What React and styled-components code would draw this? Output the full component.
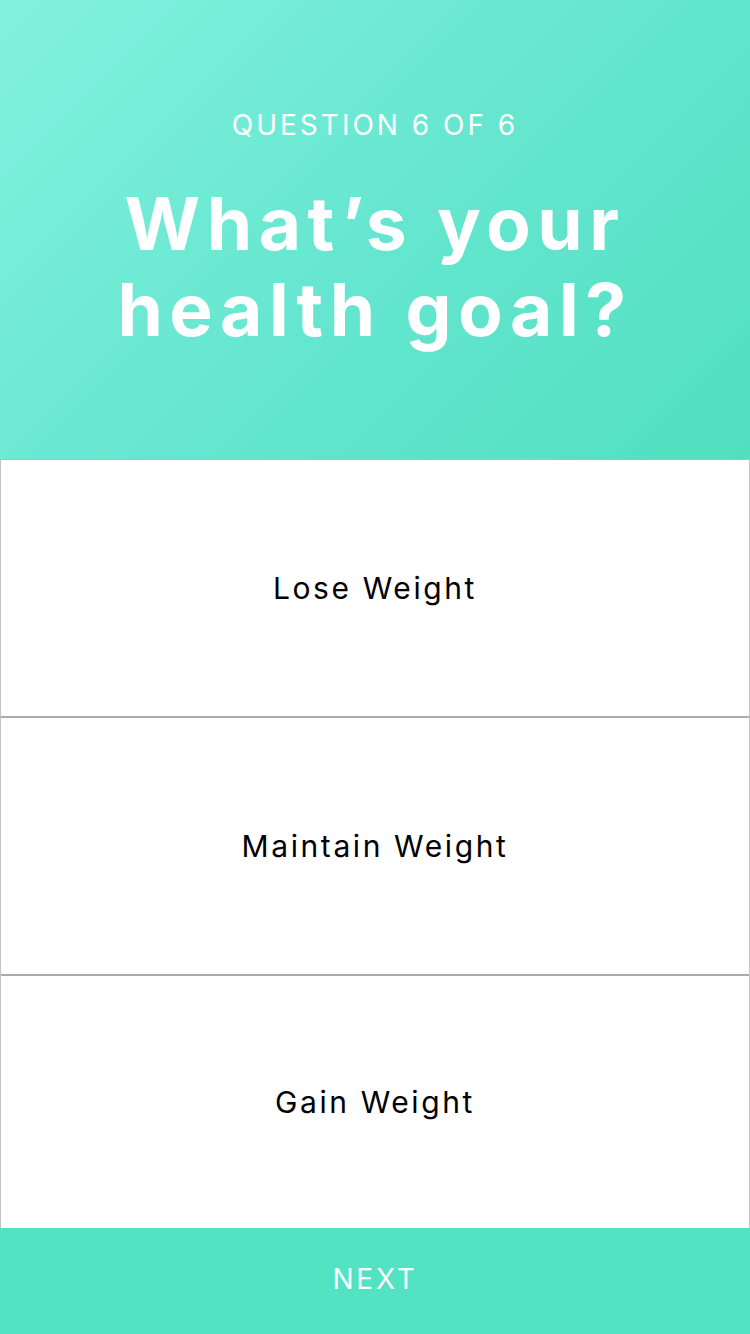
import React from 'react';
import styled, { createGlobalStyle } from 'styled-components';

const GlobalStyle = createGlobalStyle`
  html, body {
    margin: 0;
    padding: 0;
    background: #ffffff;
  }
  body {
    font-family: Inter, "Liberation Sans", sans-serif;
  }
`;

const Screen = styled.div`
  display: flex;
  flex-direction: column;
  width: 750px;
  height: 1334px;
  overflow: hidden;
`;

const Header = styled.header`
  display: flex;
  flex-direction: column;
  align-items: center;
  height: 460px;
  flex-shrink: 0;
  padding-top: 107px;
  box-sizing: border-box;
  background: linear-gradient(135deg, #82f2de 0%, #66e6d0 50%, #50e0c0 100%);
  border-bottom: 1px solid #b8b8b8;
  color: #ffffff;
`;

const Step = styled.div`
  font-size: 28px;
  font-weight: 400;
  letter-spacing: 3px;
  line-height: 36px;
`;

const Title = styled.h1`
  margin: 38px 0 0;
  font-size: 73px;
  font-weight: 700;
  letter-spacing: 6.5px;
  line-height: 86px;
  text-align: center;
`;

const Options = styled.div`
  display: flex;
  flex-direction: column;
  flex: 1;
  border-left: 1px solid #c4c4c4;
  border-right: 1px solid #c4c4c4;
`;

const Option = styled.button`
  display: flex;
  align-items: center;
  justify-content: center;
  height: ${(p) => p.$height}px;
  flex-shrink: 0;
  padding: 0;
  border: none;
  border-bottom: ${(p) => (p.$last ? 'none' : '2px solid #aaaaaa')};
  background: #ffffff;
  font-family: inherit;
  font-size: 30px;
  font-weight: 400;
  letter-spacing: 2.6px;
  color: #000000;
  cursor: pointer;
`;

const NextButton = styled.button`
  display: flex;
  align-items: center;
  justify-content: center;
  height: 106px;
  flex-shrink: 0;
  padding: 0 0 4px;
  border: none;
  background: #52e3c2;
  color: #ffffff;
  font-family: inherit;
  font-size: 28px;
  font-weight: 400;
  letter-spacing: 2.8px;
`;

const goals = ['Lose Weight', 'Maintain Weight', 'Gain Weight'];

export default function App() {
  return (
    <Screen>
      <GlobalStyle />
      <Header>
        <Step>QUESTION 6 OF 6</Step>
        <Title>
          What’s your
          <br />
          health goal?
        </Title>
      </Header>
      <Options>
        {goals.map((goal, i) => (
          <Option key={goal} $height={i === 2 ? 252 : 258} $last={i === 2}>
            {goal}
          </Option>
        ))}
      </Options>
      <NextButton>NEXT</NextButton>
    </Screen>
  );
}
